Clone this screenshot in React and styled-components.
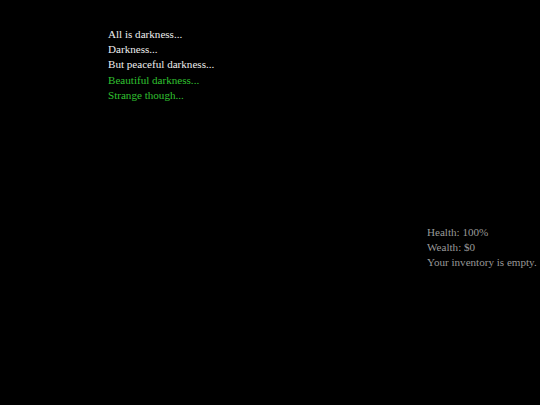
import React from "react";
import styled, { createGlobalStyle } from "styled-components";

const Global = createGlobalStyle`
  html, body {
    margin: 0;
    background: #000;
    height: 100%;
  }
  body {
    font-family: "Liberation Serif", "Times New Roman", serif;
    font-size: 11.1px;
  }
`;

const lines = [
  { text: "All is darkness...", tone: "plain" },
  { text: "Darkness...", tone: "plain" },
  { text: "But peaceful darkness...", tone: "plain" },
  { text: "Beautiful darkness...", tone: "green" },
  { text: "Strange though...", tone: "green" },
];

function App() {
  return (
    <Page>
      <Global />
      <Log>
        {lines.map((l, i) => (
          <Line key={i} tone={l.tone}>
            {l.text}
          </Line>
        ))}
      </Log>
      <Status>
        <Stat>Health: 100%</Stat>
        <Stat>Wealth: $0</Stat>
        <Stat>Your inventory is empty.</Stat>
      </Status>
    </Page>
  );
}

export default App;

const Page = styled.div`
  display: flex;
  align-items: flex-start;
  min-height: 405px;
  background: #000;
  padding: 27px 0 0 108px;
  box-sizing: border-box;
  overflow: hidden;
`;

const Log = styled.div`
  width: 319px;
  flex-shrink: 0;
`;

const Line = styled.div`
  line-height: 15.2px;
  color: ${(p) => (p.tone === "green" ? "#30c030" : "#eeeeee")};
`;

const Status = styled.div`
  margin-top: 198px;
  white-space: nowrap;
`;

const Stat = styled.div`
  line-height: 15.2px;
  color: #999999;
`;
